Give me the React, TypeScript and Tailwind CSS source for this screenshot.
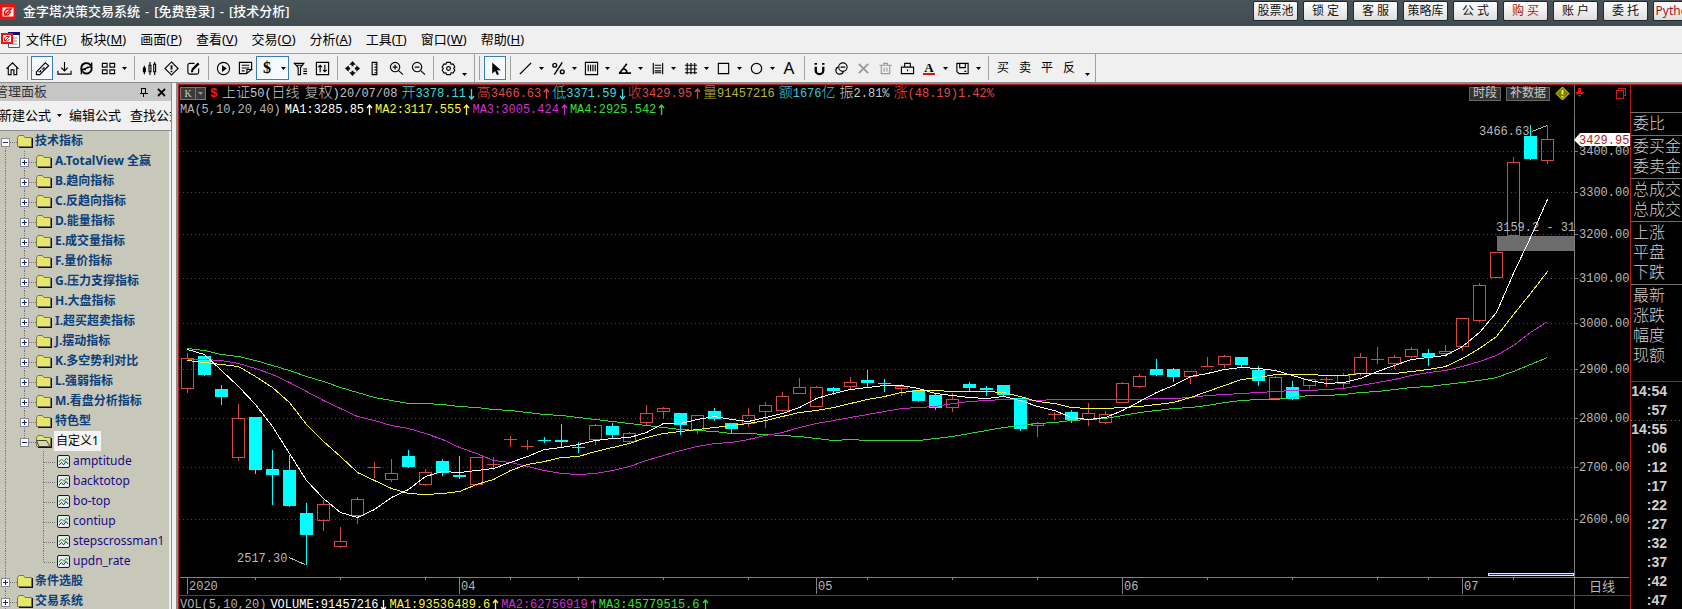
import React from "react";

type Candle = [high: number, top: number, bottom: number, low: number, up: 0 | 1];

const STEP = 17;
const FIRST_X = 187;

// y positions of every daily bar
const candles: Candle[] = [
  [353, 358, 388, 392, 1], [356, 356, 375, 375, 0], [385, 389, 397, 404, 0],
  [404, 418, 457, 460, 1], [417, 417, 470, 473, 0], [450, 469, 475, 504, 0],
  [455, 470, 506, 506, 0], [503, 513, 535, 564, 0], [500, 504, 520, 530, 1],
  [527, 541, 546, 547, 1], [497, 499, 515, 523, 1], [462, 467, 467, 477, 1],
  [459, 473, 479, 481, 1], [450, 456, 467, 467, 0], [469, 472, 484, 485, 1],
  [459, 461, 473, 475, 0], [456, 475, 477, 478, 0], [457, 457, 484, 485, 1],
  [457, 464, 464, 469, 1], [436, 439, 439, 446, 1], [440, 446, 446, 449, 1],
  [437, 440, 440, 442, 0], [424, 440, 442, 446, 0], [442, 447, 447, 452, 0],
  [424, 425, 439, 444, 1], [423, 426, 435, 437, 0], [432, 433, 441, 442, 1],
  [405, 413, 422, 425, 1], [407, 408, 411, 418, 1], [413, 413, 425, 434, 0],
  [415, 415, 430, 433, 1], [408, 411, 419, 420, 0], [423, 423, 429, 432, 0],
  [408, 415, 423, 426, 1], [402, 405, 411, 427, 1], [392, 396, 410, 411, 1],
  [378, 387, 393, 393, 1], [386, 387, 406, 406, 1], [387, 388, 391, 394, 0],
  [377, 382, 386, 389, 1], [370, 380, 383, 386, 0], [379, 383, 383, 391, 0],
  [384, 386, 388, 395, 1], [390, 390, 401, 401, 0], [394, 395, 408, 409, 0],
  [393, 399, 407, 411, 1], [382, 384, 388, 391, 0], [386, 388, 390, 395, 0],
  [385, 385, 395, 395, 0], [398, 398, 429, 430, 0], [422, 423, 425, 436, 1],
  [412, 414, 414, 419, 1], [410, 412, 420, 422, 0], [403, 413, 419, 425, 1],
  [411, 414, 422, 423, 1], [382, 383, 402, 402, 1], [374, 376, 386, 387, 1],
  [359, 369, 375, 375, 0], [368, 369, 377, 381, 0], [371, 371, 376, 383, 1],
  [357, 366, 366, 366, 1], [355, 356, 364, 367, 1], [357, 357, 365, 367, 0],
  [366, 370, 381, 385, 0], [376, 377, 398, 398, 1], [381, 387, 399, 399, 0],
  [379, 379, 385, 388, 1], [377, 379, 379, 386, 1], [373, 375, 383, 388, 1],
  [353, 357, 373, 375, 1], [347, 359, 359, 363, 1], [355, 357, 363, 368, 1],
  [347, 349, 356, 357, 1], [349, 353, 357, 365, 0], [345, 351, 353, 356, 1],
  [318, 318, 346, 350, 1], [283, 285, 320, 321, 1], [252, 252, 277, 277, 1],
  [157, 162, 235, 235, 1], [125, 136, 159, 159, 0], [125, 139, 160, 163, 1],
];

const averages = [
  {
    color: "#33d633",
    ys: [348, 350, 354, 356, 360, 365, 370, 376, 381, 387, 392, 397, 400, 403, 403, 404, 406, 407, 409, 410, 412, 414, 415, 417, 419, 421, 423, 425, 427, 429, 430, 431, 433, 433, 434, 435, 436, 438, 440, 439, 440, 440, 440, 440, 438, 436, 433, 430, 427, 425, 423, 422, 420, 419, 418, 415, 412, 410, 408, 407, 405, 402, 400, 399, 399, 397, 395, 395, 394, 392, 391, 389, 387, 386, 384, 382, 380, 377, 371, 364, 357],
  },
  {
    color: "#c82cc8",
    ys: [359, 359, 360, 363, 368, 374, 382, 391, 400, 408, 416, 420, 425, 428, 433, 439, 447, 453, 460, 462, 466, 470, 473, 474, 473, 470, 466, 460, 455, 450, 446, 443, 442, 439, 435, 432, 427, 423, 420, 417, 414, 411, 408, 407, 406, 403, 401, 400, 399, 399, 400, 399, 399, 399, 399, 399, 399, 398, 398, 397, 395, 394, 393, 392, 391, 390, 390, 389, 388, 385, 382, 379, 375, 372, 370, 366, 361, 355, 345, 332, 321],
  },
  {
    color: "#f5f53c",
    ys: [360, 362, 364, 366, 376, 387, 402, 424, 441, 456, 472, 480, 488, 493, 494, 493, 491, 484, 479, 470, 464, 461, 457, 456, 451, 447, 443, 437, 433, 431, 429, 427, 425, 423, 420, 416, 412, 410, 407, 403, 399, 396, 392, 390, 390, 391, 391, 391, 392, 396, 401, 403, 407, 408, 408, 407, 406, 404, 402, 397, 391, 385, 379, 377, 374, 374, 374, 375, 375, 373, 373, 373, 371, 369, 366, 358, 348, 336, 314, 293, 271],
  },
  {
    color: "#ffffff",
    ys: [349, 354, 370, 386, 404, 426, 453, 480, 498, 512, 517, 509, 497, 489, 476, 471, 472, 470, 468, 462, 456, 449, 447, 444, 440, 438, 437, 432, 423, 423, 419, 416, 419, 421, 417, 413, 407, 398, 393, 389, 387, 385, 385, 388, 393, 395, 397, 398, 396, 400, 406, 410, 417, 419, 417, 410, 401, 392, 385, 376, 373, 369, 367, 368, 370, 375, 380, 383, 382, 378, 371, 365, 359, 357, 355, 346, 332, 312, 273, 237, 199],
  },
];

const priceLines: [string, number][] = [
  ["3400.00", 151], ["3300.00", 192], ["3200.00", 234], ["3100.00", 278], ["3000.00", 323],
  ["2900.00", 369], ["2800.00", 418], ["2700.00", 467], ["2600.00", 519],
];

const months: [string, number][] = [["2020", 0], ["04", 16], ["05", 37], ["06", 55], ["07", 75]];
const weekTicks = [4, 9, 14, 19, 23, 28, 33, 40, 45, 50, 60, 65, 70, 73, 78];

const mono = "font-['Liberation_Mono','Noto_Sans_CJK_SC',monospace]";
const sans = "font-['Noto_Sans','Noto_Sans_CJK_SC',sans-serif]";

const icons: Record<string, React.ReactNode> = {
  home: <path d="M1.5 8.5 8 2l6.500 6.500M3.500 7v7.500h3v-5h3v5h3V7" />,
  ruler: (
    <>
      <path d="M1.500 11.500 11 2l3.500 3L5 14.500H1.500z" />
      <path d="M3.500 11.500h2.500v-2M7 8.500h2.500v-2" />
    </>
  ),
  download: <path d="M8 1v9M4.500 7 8 10.500 11.500 7M1 10.500v3.500h14v-3.500" />,
  sync: (
    <>
      <path d="M13 5.500A5.500 5.500 0 0 0 2.500 8c0 1 .3 2 1 3" strokeWidth="2" />
      <path d="M3.500 11A5.500 5.500 0 0 0 13.500 8c0-1-.3-1.800-.7-2.500" strokeWidth="2" />
      <path d="M13.500 1.500v5h-5M2.500 14v-5h5M5 8.500l6-2" strokeWidth="1.500" />
    </>
  ),
  blocks: <path d="M1.500 2.500h5v4h-5zM9.500 2.500h5v4h-5zM1.500 9.500h5v4h-5zM9.500 9.500h5v4h-5z" />,
  bars: (
    <>
      <path d="M2.500 5v9M8.500 1v14M13.500 1v14" />
      <path d="M1.500 7.500h2v4h-2z" fill="currentColor" />
      <path d="M7.500 4.500h2v7h-2zM12.500 3.500h2v8h-2z" fill="#f0f0f0" />
    </>
  ),
  alert: (
    <>
      <path d="m8 1 7 7-7 7-7-7z" />
      <path d="M8 4.500v4.500M8 10.500v1.500" strokeWidth="2" />
    </>
  ),
  edit: (
    <>
      <path d="M9 2.500H4a2 2 0 0 0-2 2V12a2 2 0 0 0 2 2h7.500a2 2 0 0 0 2-2V8" />
      <path d="m6.500 9.500 7-7M5.500 11l2-.5" strokeWidth="2.500" />
    </>
  ),
  play: (
    <>
      <circle cx="8" cy="8" r="6.500" />
      <path d="m7 5.500 3.500 2.500L7 10.500z" fill="currentColor" />
    </>
  ),
  note: <path d="M14.500 9V1.500h-13v12H9l5.500-4.500H9.500v4M4 4.500h8M4 7.500h8M4 10.500h3" />,
  filter: <path d="M1.500 2.500h10L8 7v7.500H5.500V7zM4 4.500h5M11 8.500h4M11 11h4M11 13.500h4" />,
  updown: <path d="M1.500 1.500h13v13h-13zM5.500 12V4.500M3.500 6.500l2-2 2 2M10.500 4v7.500M8.500 9.500l2 2 2-2" />,
  move: (
    <>
      <path d="M8 5.500v-2M8 10.500v2M5.500 8h-2M10.500 8h2" strokeWidth="2" />
      <path d="M8 0 4.500 4h7zM8 16l-3.500-4h7zM0 8l4-3.500v7zM16 8l-4-3.500v7z" fill="currentColor" stroke="none" />
    </>
  ),
  scale: <path d="M5.500 1.500h5v13h-5zM8 3.500h2.500M8 6.500h2.500M8 9.500h2.500M8 12.500h2.500" />,
  zoomIn: <path d="M11.500 6.500a5 5 0 1 1-10 0 5 5 0 0 1 10 0zM10.500 10.500l4.500 4M4 6.500h5M6.500 4v5" />,
  zoomOut: <path d="M11.500 6.500a5 5 0 1 1-10 0 5 5 0 0 1 10 0zM10.500 10.500l4.500 4M4 6.500h5" />,
  gear: (
    <>
      <path d="M6 1.500h4l.7 1.900 2.100-.3 2 3.200L13.500 8l1.300 1.700-2 3.200-2.100-.3-.7 1.900H6l-.7-1.900-2.100.3-2-3.200L2.500 8 1.200 6.300l2-3.200 2.100.3z" />
      <circle cx="8" cy="8" r="2" />
    </>
  ),
  cursor: <path d="M4.500 1.500v12l3-2.800 2 4.300 2.200-1-2-4.200h4z" fill="currentColor" stroke="none" />,
  line: <path d="M2 14 14 2" strokeWidth="1.500" />,
  percent: (
    <>
      <path d="M3.500 14.500 12 1.500" strokeWidth="1.500" />
      <circle cx="4" cy="4.500" r="2" strokeWidth="1.500" />
      <circle cx="12" cy="11.500" r="2" strokeWidth="1.500" />
    </>
  ),
  barBox: <path d="M1.500 1.500h13v13h-13zM4.500 4v7M7 4v7M9.500 4v7M12 4v7" />,
  angle: <path d="M2 13h13M3 12.500 10.500 3M6.500 8.500c2.500 0 4 1.500 4 4" strokeWidth="1.800" />,
  levels: <path d="M3.500 2v12M13.500 2v12M5 4.500h7M5 7.500h7M5 10.500h7M5 12.500h7" />,
  hash: <path d="M4.500 2v12M8.500 2v12M12.500 2v12M2 4.500h13M2 8.500h13M2 12.500h13" />,
  square: <path d="M2.500 2.500h11v11h-11z" />,
  circle: <circle cx="8" cy="8" r="5.500" strokeWidth="1.300" />,
  magnet: (
    <>
      <path d="M4 6v4a4 4 0 0 0 8 0V6" strokeWidth="2.500" />
      <path d="M2.700 3h2.600M10.700 3h2.600" strokeWidth="2" />
    </>
  ),
  copy: (
    <>
      <circle cx="9.500" cy="6.500" r="4.500" />
      <path d="M7 6.500h5M4.500 6.500C2.500 7 2 8.500 2 10a3.800 3.800 0 0 0 4 4c2 0 3.500-1 4-3" strokeWidth="1.300" />
    </>
  ),
  cross: <path d="m3 3 10 10M13 3 3 13" stroke="#999" strokeWidth="2" />,
  trash: <path d="M1.500 4.500h13M6 4V2.500h4V4M3.500 4.500v9h9v-9M6.500 7v4.500M9.500 7v4.500" stroke="#999" />,
  lock: <path d="M1.500 6.500h13v7h-13zM5 6.500v-4h6v4M8 9v2" />,
  save: <path d="M2 2.500h12v11H4.500L2 11.500zM5 3v4h6V3M10 11h2" />,
};

const Caret = ({ low }: { low?: boolean }) => (
  <svg viewBox="0 0 5 3" className={`h-[3px] w-[5px] ${low ? "mt-3" : ""}`}>
    <path d="M0 0h5L2.500 3z" fill="#000" />
  </svg>
);

const Tool = ({
  icon,
  label,
  drop,
  active,
  children,
}: {
  icon?: string;
  label: string;
  drop?: boolean;
  active?: boolean;
  children?: React.ReactNode;
}) => (
  <button
    aria-label={label}
    className={`flex h-6 shrink-0 items-center ${active ? "bg-[#f6fafe] outline outline-1 -outline-offset-1 outline-[#3c7fb8]" : ""}`}
  >
    <span className="flex w-[22px] items-center justify-center text-black">
      {icon ? (
        <svg viewBox="0 0 16 16" className="size-[15px]" fill="none" stroke="currentColor" strokeWidth="1.200">
          {icons[icon]}
        </svg>
      ) : (
        children
      )}
    </span>
    {drop && (
      <span className="flex w-[11px] justify-center">
        <Caret />
      </span>
    )}
  </button>
);

const Sep = () => (
  <span className="flex w-2 shrink-0 justify-center">
    <span className="h-6 w-px bg-[#a0a0a0]" />
  </span>
);

const titleButtons = ["股票池", "锁 定", "客 服", "策略库", "公 式", "购 买", "账 户", "委 托", "Python"];

const TitleBar = () => (
  <header className="flex h-[26px] shrink-0 items-start justify-between bg-linear-to-b from-[#4a555b] to-[#414c51]">
    <div className="flex h-6 items-center gap-[7px]">
      <svg viewBox="0 0 16 16" className="size-4">
        <path d="M0 0h16v16H0z" fill="#e81414" />
        <path d="M2.500 3.500h11v9h-11z" fill="#fff" />
        <path d="M4.500 11V7.500L7 5h4L5 11h3l3-3.500" fill="none" stroke="#e81414" strokeWidth="1.500" />
      </svg>
      <h1 className="flex gap-[5px] text-[13px] font-medium whitespace-nowrap text-white">
        <span>金字塔决策交易系统</span>
        <span>-</span>
        <span>[免费登录]</span>
        <span>-</span>
        <span>[技术分析]</span>
      </h1>
    </div>
    <nav className="-mr-4 flex gap-[5px] pt-px">
      {titleButtons.map((name) => (
        <button
          key={name}
          className={`h-5 w-[45px] rounded-xs border border-[#22282b] bg-linear-to-b from-white to-[#dedede] text-[12px] leading-4 whitespace-nowrap ${
            name === "购 买" || name === "Python" ? "text-[#b01414]" : "text-[#111]"
          }`}
        >
          {name}
        </button>
      ))}
    </nav>
  </header>
);

const menus = [
  ["文件", "F"], ["板块", "M"], ["画面", "P"], ["查看", "V"], ["交易", "O"],
  ["分析", "A"], ["工具", "T"], ["窗口", "W"], ["帮助", "H"],
];

const MenuBar = () => (
  <nav className="flex h-[27px] shrink-0 items-center gap-[14px] bg-[#f0f0f0] text-[13px] text-black">
    <svg viewBox="0 0 20 18" className="-mr-2 h-[18px] w-5">
      <path d="M8.500 1.500h11v15h-11z" fill="#fff" stroke="#555" />
      <path d="M8 1h12v3H8z" fill="#10107a" />
      <path d="M12 7h5M12 10h5M12 13h5" stroke="#888" />
      <path d="M1 2h12v11H1z" fill="#e81414" />
      <path d="M3 4h8v7H3z" fill="#fff" />
      <path d="M4.500 10V7L6 5.500h3.500L5 10h2.500L9.500 8" fill="none" stroke="#e81414" />
    </svg>
    {menus.map(([name, key]) => (
      <button key={key} className="whitespace-nowrap">
        {name}(<u>{key}</u>)
      </button>
    ))}
  </nav>
);

const ToolBar = () => (
  <div className="flex h-[29px] shrink-0 items-center border-t border-[#a0a0a0] bg-[#f0f0f0] pl-px">
    <Tool icon="home" label="首页" />
    <Sep />
    <Tool icon="ruler" label="画线" active />
    <Tool icon="download" label="下载" />
    <Tool icon="sync" label="刷新" />
    <Tool icon="blocks" label="布局" drop />
    <Sep />
    <Tool icon="bars" label="K线" />
    <Tool icon="alert" label="预警" />
    <Tool icon="edit" label="编辑" />
    <Sep />
    <Tool icon="play" label="播放" />
    <Tool icon="note" label="笔记" />
    <Tool label="复权" drop active>
      <b className="font-['Liberation_Serif',serif] text-[16px]">$</b>
    </Tool>
    <Tool icon="filter" label="筛选" />
    <Tool icon="updown" label="排序" />
    <Sep />
    <Tool icon="move" label="移动" />
    <Tool icon="scale" label="标尺" />
    <Tool icon="zoomIn" label="放大" />
    <Tool icon="zoomOut" label="缩小" />
    <Sep />
    <Tool icon="gear" label="设置" />
    <span className="flex w-[15px] justify-center pr-1">
      <Caret low />
    </span>
    <span className="h-7 w-px shrink-0 bg-[#a0a0a0]" />
    <span className="mx-1 h-6 w-px shrink-0 bg-[#a0a0a0]" />
    <Tool icon="cursor" label="选择" active />
    <Sep />
    <Tool icon="line" label="直线" drop />
    <Tool icon="percent" label="百分比" drop />
    <Tool icon="barBox" label="周期线" drop />
    <Tool icon="angle" label="角度线" drop />
    <Tool icon="levels" label="分割线" drop />
    <Tool icon="hash" label="网格" drop />
    <Tool icon="square" label="矩形" drop />
    <Tool icon="circle" label="圆" drop />
    <Tool label="文字">
      <span className="text-[17px]">A</span>
    </Tool>
    <Sep />
    <Tool icon="magnet" label="吸附" />
    <Tool icon="copy" label="复制" />
    <Tool icon="cross" label="删除" />
    <Tool icon="trash" label="清空" />
    <Tool icon="lock" label="锁定" />
    <Tool label="颜色" drop>
      <b className="border-b-2 border-[#d01818] px-px font-['Liberation_Serif',serif] text-[13px] leading-[11px]">A</b>
    </Tool>
    <Tool icon="save" label="保存" drop />
    <Sep />
    {["买", "卖", "平", "反"].map((t) => (
      <Tool key={t} label={t}>
        <span className="text-[12px]">{t}</span>
      </Tool>
    ))}
    <span className="flex w-[15px] justify-center">
      <Caret low />
    </span>
    <span className="h-7 w-px shrink-0 bg-[#a0a0a0]" />
  </div>
);

// one cell of the tree's dotted connectors, with an optional +/- box
const Guide = ({
  up,
  down,
  across,
  box,
  wide,
}: {
  up?: boolean;
  down?: boolean;
  across?: boolean;
  box?: "+" | "-";
  wide?: boolean;
}) => (
  <svg viewBox={wide ? "0 0 19 20" : "0 0 17 20"} className={`h-5 shrink-0 ${wide ? "w-[19px]" : "w-[17px]"}`} shapeRendering="crispEdges">
    <g stroke="#777" strokeDasharray="1 1">
      {up && <path d="M5.500 0v11" />}
      {down && <path d="M5.500 11v9" />}
      {across && <path d="M6 11.500h11" />}
    </g>
    {box && (
      <>
        <path d="M1.500 7.500h8v8h-8z" fill="#fff" stroke="#8a8a96" />
        <path d={box === "+" ? "M3 11.500h5M5.500 9v5" : "M3 11.500h5"} stroke="#1c2c78" />
      </>
    )}
  </svg>
);

const Folder = ({ open }: { open?: boolean }) => (
  <svg viewBox="0 0 16 14" className="h-[14px] w-4 shrink-0">
    <path d="M2 13.300h13.300V4" fill="none" stroke="#111" strokeWidth="1.400" />
    <path d="M.5 12.500v-9l1.500-2h4.500l1.500 2h6.500v9z" fill="#e6e66c" stroke="#77774a" />
    {open && <path d="M.5 6.500h10l3.500 6H3z" fill="#d8d8b0" stroke="#444" />}
  </svg>
);

const FormulaIcon = () => (
  <svg viewBox="0 0 13 13" className="size-[13px] shrink-0">
    <rect x=".5" y=".5" width="12" height="12" rx="1.500" fill="#e8ece8" stroke="#101070" />
    <path d="m2 7 2.500-3L7 6.500 9.500 3l1.500 2" fill="none" stroke="#2a8a2a" />
    <path d="m2 10 2.500-2.500L6.500 10l2.500-3.500 2 2.500" fill="none" stroke="#2030a0" />
  </svg>
);

const groups = [
  "A.TotalView 全赢", "B.趋向指标", "C.反趋向指标", "D.能量指标", "E.成交量指标", "F.量价指标",
  "G.压力支撑指标", "H.大盘指标", "I.超买超卖指标", "J.摆动指标", "K.多空势利对比", "L.强弱指标",
  "M.看盘分析指标", "特色型",
];
const formulas = ["amptitude", "backtotop", "bo-top", "contiup", "stepscrossman1", "updn_rate"];

const Tree = () => (
  <ul className="mr-[2px] min-h-0 flex-1 overflow-hidden bg-[#c8c8ba] text-[12px] leading-5 whitespace-nowrap text-[#0a3f7a]">
    <li className="flex h-5 items-center">
      <Guide down across box="-" />
      <Folder />
      <b className="ml-[2px]">技术指标</b>
    </li>
    {groups.map((name) => (
      <li key={name} className="flex h-5 items-center">
        <Guide up down wide />
        <Guide up down across box="+" />
        <Folder />
        <b className="ml-[3px]">{name}</b>
      </li>
    ))}
    <li className="flex h-5 items-center">
      <Guide up down wide />
      <Guide up across box="-" />
      <Folder open />
      <span className="ml-[2px] bg-[#f4f4f4] px-[2px] text-black">自定义1</span>
    </li>
    {formulas.map((name, i) => (
      <li key={name} className="flex h-5 items-center text-[#1a0a80]">
        <Guide up down wide />
        <Guide wide />
        <Guide up down={i < formulas.length - 1} across wide />
        <FormulaIcon />
        <span className="ml-[3px]">{name}</span>
      </li>
    ))}
    {["条件选股", "交易系统"].map((name) => (
      <li key={name} className="flex h-5 items-center">
        <Guide up down across box="+" />
        <Folder />
        <b className="ml-[2px]">{name}</b>
      </li>
    ))}
  </ul>
);

const Sidebar = () => (
  <aside className="flex w-[172px] shrink-0 flex-col overflow-hidden border-r border-[#8c8c8c] bg-[#f0f0f0] text-[13px] whitespace-nowrap">
    <div className="flex h-[18px] shrink-0 items-center bg-[#c6c6c6] text-[#333]">
      <h2 className="-ml-[5px] flex-1">管理面板</h2>
      <button aria-label="固定" className="mr-[9px]">
        <svg viewBox="0 0 8 10" className="h-[10px] w-2" fill="none" stroke="#000" shapeRendering="crispEdges">
          <path d="M1.500 6V1.500h4V6M5 1v5M0 6.500h8M3.500 7v3" />
        </svg>
      </button>
      <button aria-label="关闭" className="mr-[5px]">
        <svg viewBox="0 0 9 9" className="size-[9px]" stroke="#000" strokeWidth="1.800">
          <path d="m1 1 7 7M8 1 1 8" />
        </svg>
      </button>
    </div>
    <div className="-ml-px flex h-[29px] shrink-0 items-center text-black">
      <button className="flex items-center gap-[6px]">
        新建公式 <Caret />
      </button>
      <button className="ml-[7px]">编辑公式</button>
      <button className="ml-[9px]">查找公式</button>
    </div>
    <span className="h-px shrink-0 bg-[#8c8c8c]" />
    <Tree />
  </aside>
);

const Arrow = ({ down }: { down?: boolean }) => (
  <svg viewBox="0 0 7 12" className="mx-[2px] h-3 w-[7px] shrink-0" fill="none" stroke="currentColor" strokeWidth="1.300">
    <path d={down ? "M3.500 1v10M1 8l2.500 3L6 8" : "M3.500 11V1M1 4l2.500-3L6 4"} />
  </svg>
);

const quotes = [
  { name: "开", value: "3378.11", dir: "down", color: "text-[#3cdcdc]" },
  { name: "高", value: "3466.63", dir: "up", color: "text-[#e04a44]" },
  { name: "低", value: "3371.59", dir: "down", color: "text-[#3cdcdc]" },
  { name: "收", value: "3429.95", dir: "up", color: "text-[#e04a44]" },
  { name: "量", value: "91457216", color: "text-[#b8b830] mr-1" },
  { name: "额", value: "1676", unit: "亿", color: "text-[#3cc8dc] mr-1" },
  { name: "振", value: "2.81%", color: "text-[#c8c8c8] mr-1" },
  { name: "涨", value: "(48.19)1.42%", color: "text-[#e04a44]" },
];

const Indicator = ({ text, color, down }: { text: string; color: string; down?: boolean }) => (
  <span className={`flex shrink-0 items-center ${color}`}>
    {text}
    <Arrow down={down} />
  </span>
);

const chipClass = "h-[14px] border border-[#666] bg-[#333] px-[3px] text-[12px] leading-3 text-[#c8c8c8]";

const ChartHeader = () => (
  <div className="flex shrink-0">
    <div className="min-w-0 flex-1 pl-px">
      <div className="flex h-[17px] items-center overflow-hidden text-[12px] whitespace-nowrap">
        <button aria-label="K线" className="flex h-[13px] w-[26px] shrink-0 items-center border border-[#777] bg-[#3a3a3a] text-[10px] text-[#ccc]">
          <span className="flex-1 border-r border-[#777] font-['Liberation_Serif',serif] leading-[11px]">K</span>
          <svg viewBox="0 0 5 3" className="mx-[2px] h-[3px] w-[5px]">
            <path d="M0 0h5L2.500 3z" fill="#999" />
          </svg>
        </button>
        <b className="ml-1 w-3 text-[13px] text-[#f01818]">$</b>
        <span className="flex items-center font-light text-[#c8c8c8]">
          <span className="text-[14px]">上证</span>50(<span className="text-[14px]">日线</span>
          <span className="ml-[5px] text-[14px]">复权</span>)
        </span>
        <span className="mr-1 text-[#c0c0c0]">20/07/08</span>
        {quotes.map((q) => (
          <span key={q.name} className={`flex shrink-0 items-center ${q.color}`}>
            <span className="text-[14px] font-light">{q.name}</span>
            {q.value}
            {q.unit && <span className="text-[14px] font-light">{q.unit}</span>}
            {q.dir && <Arrow down={q.dir === "down"} />}
          </span>
        ))}
        <span className="ml-auto flex items-center gap-[5px] pr-1">
          <button className={chipClass}>时段</button>
          <button className={chipClass}>补数据</button>
          <svg viewBox="0 0 15 15" className="size-[15px]">
            <path d="m7.500 1 6.500 6.500-6.500 6.500L1 7.500z" fill="#7c7c00" stroke="#e8e800" />
            <path d="M7.500 4v4.500M7.500 10v1.500" stroke="#ffff20" strokeWidth="1.800" />
          </svg>
        </span>
      </div>
      <div className="flex h-[15px] items-center overflow-hidden text-[12px] whitespace-nowrap">
        <span className="mr-1 text-[#b4b4b4]">MA(5,10,20,40)</span>
        <Indicator text="MA1:3285.85" color="text-white" />
        <Indicator text="MA2:3117.555" color="text-[#f5f53c]" />
        <Indicator text="MA3:3005.424" color="text-[#d030d0]" />
        <Indicator text="MA4:2925.542" color="text-[#33e033]" />
      </div>
    </div>
    <div className="flex w-[56px] justify-between border-l border-[#707070] pt-[3px] pr-1">
      <svg viewBox="0 0 9 9" className="size-[9px]">
        <path d="M3 0h3v6H3zM0 4l4.500 5L9 4H6v3H3V4z" fill="#f01010" />
      </svg>
      <svg viewBox="0 0 10 11" className="h-[11px] w-[10px]" fill="none" stroke="#d01818" shapeRendering="crispEdges">
        <path d="M2.500 2.500v-2h7v7h-2M.5 2.500h7v8h-7z" />
      </svg>
    </div>
  </div>
);

const PriceChart = () => (
  <svg viewBox="179 117 1451 478" className={`block w-full ${mono}`} fontSize="12" fill="#b8b8b8" role="img" aria-label="上证50 日线">
    <g shapeRendering="crispEdges" fill="none">
      {priceLines.map(([label, y]) => (
        <g key={label}>
          <path d={`M179 ${y + 0.5}H1574`} stroke="#4a4a4a" strokeDasharray="1 3" />
          <path d={`M1574 ${y + 0.5}h4`} stroke="#808080" />
        </g>
      ))}
      <path d="M1574.500 117V595M180 577.500H1629" stroke="#808080" />
      {months.map(([label, i]) => (
        <path key={label} d={`M${FIRST_X + i * STEP + 0.5} 577v17`} stroke="#808080" />
      ))}
      {weekTicks.map((i) => (
        <path key={i} d={`M${FIRST_X + i * STEP + 0.5} 577v3`} stroke="#808080" />
      ))}
      <path d="M1497 236h77v15h-77z" fill="#6c6c6c" />
      <path d="M1488.500 573.500h85v2h-85z" fill="#203468" stroke="#e8ecf8" />

      {candles.map(([high, top, bottom, low, up], i) => {
        const x = FIRST_X + i * STEP;
        const color = up ? "#d24a44" : "#00ffff";
        return (
          <g key={i} stroke={color}>
            <path d={`M${x + 0.5} ${high}V${top}M${x + 0.5} ${bottom}V${low + 1}`} />
            {bottom === top ? (
              <path d={`M${x - 6} ${top + 0.5}h13`} />
            ) : (
              <rect x={x - 5.5} y={top + 0.5} width="12" height={bottom - top - (up ? 0 : 1)} fill={up ? "none" : color} />
            )}
          </g>
        );
      })}
      {averages.map(({ color, ys }) => (
        <polyline key={color} stroke={color} points={ys.map((y, i) => `${FIRST_X + i * STEP + 0.5},${y + 0.5}`).join(" ")} />
      ))}
      <path d="M1532 131.500 1547 125.500M289 557.500 305 564.500" stroke="#b8b8b8" />
    </g>

    {priceLines.map(([label, y]) => (
      <text key={label} x="1579" y={y + 4}>{label}</text>
    ))}
    {months.map(([label, i]) => (
      <text key={label} x={FIRST_X + i * STEP + 2} y="590">{label}</text>
    ))}
    <text x="1479" y="135">3466.63</text>
    <text x="1496" y="231">3159.2 - 31</text>
    <text x="237" y="562">2517.30</text>
    <text x="1589" y="591" fontSize="13">日线</text>
    <path d="m1574 140 6-7h50v13h-50z" fill="#fff" />
    <text x="1579" y="144" fill="#b01818">3429.95</text>
  </svg>
);

const VolumeHeader = () => (
  <div className="flex min-h-0 flex-1 overflow-hidden border-t border-[#b01c1c]">
    <div className="flex h-[18px] min-w-0 flex-1 items-center pl-px text-[12px] whitespace-nowrap">
      <span className="mr-1 text-[#b4b4b4]">VOL(5,10,20)</span>
      <Indicator text="VOLUME:91457216" color="text-white" down />
      <Indicator text="MA1:93536489.6" color="text-[#f5f53c]" />
      <Indicator text="MA2:62756919" color="text-[#d030d0]" />
      <Indicator text="MA3:45779515.6" color="text-[#33e033]" />
    </div>
    <div className="w-[56px] border-l border-[#707070]" />
  </div>
);

const quoteBlocks = [
  ["委比"],
  ["委买金", "委卖金"],
  ["总成交", "总成交"],
  ["上涨", "平盘", "下跌"],
  ["最新", "涨跌", "幅度", "现额"],
];
const ticks = ["14:54", ":57", "14:55", ":06", ":12", ":17", ":22", ":27", ":32", ":37", ":42", ":47"];

const QuotePanel = () => (
  <aside className="flex w-[52px] shrink-0 flex-col overflow-hidden border-l border-[#b01c1c] pt-[27px] text-[#d0d0d0]">
    {quoteBlocks.map((rows, i) => (
      <div key={i} className="border-t border-[#707070] pb-[2px] pl-[2px] text-[16px] leading-5 font-light whitespace-nowrap last-of-type:pb-0">
        {rows.map((row, j) => (
          <p key={j}>{row}</p>
        ))}
      </div>
    ))}
    <ul className="mt-4 border-t border-[#b01c1c] font-['Liberation_Sans',sans-serif] text-[14px] leading-[19px] font-bold">
      {ticks.map((t) => (
        <li key={t} className={`pr-[15px] text-right ${t === "14:55" ? "bg-[repeating-linear-gradient(to_right,#666_0_1px,transparent_1px_4px)] bg-size-[100%_1px] bg-no-repeat" : ""}`}>
          {t}
        </li>
      ))}
    </ul>
  </aside>
);

export default function App() {
  return (
    <div className={`flex h-screen flex-col overflow-hidden bg-black ${sans}`}>
      <TitleBar />
      <MenuBar />
      <ToolBar />
      <div className="flex min-h-0 flex-1 border-t border-[#8c8c8c] bg-[#f0f0f0]">
        <Sidebar />
        <div className="ml-1 flex min-w-0 flex-1 border-t border-l-2 border-[#8c8c8c]">
          <main className="flex min-w-0 flex-1 border-t border-l border-[#b01c1c] bg-black">
            <section className={`flex min-w-0 flex-1 flex-col ${mono}`}>
              <ChartHeader />
              <PriceChart />
              <VolumeHeader />
            </section>
            <QuotePanel />
          </main>
        </div>
      </div>
    </div>
  );
}
